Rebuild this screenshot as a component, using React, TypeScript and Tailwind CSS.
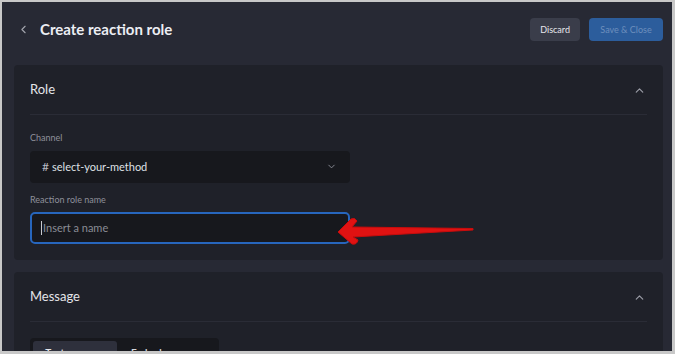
import { ChevronLeft, ChevronDown, ChevronUp } from 'lucide-react';

const font = { fontFamily: 'Lato, "Open Sans", Arial, sans-serif' };

function Card({ title, children }: { title: string; children: React.ReactNode }) {
    return (
        <div className="ml-[12px] mr-[9px] rounded-[4px] bg-[#1f2129] px-4 pb-4">
            <div className="flex h-[50px] items-center justify-between border-b border-[#2a2c36] pt-[1px]">
                <span className="text-[13px] text-[#e4e5ea]">{title}</span>
                <ChevronUp className="mr-[1px] h-[13px] w-[13px] text-[#9a9ca6]" strokeWidth={2.2} />
            </div>
            {children}
        </div>
    );
}

export default function App() {
    return (
        <div className="h-[354px] w-[675px] overflow-hidden bg-[#c8c8c8] pb-[3px] pl-[2px] pr-[3px] pt-[2px]" style={font}>
            <div className="relative h-full w-full overflow-hidden bg-[#272934]">
                {/* Header */}
                <div className="flex h-[63px] items-center justify-between pb-[8px] pl-[15px] pr-[9px]">
                    <div className="flex items-center">
                        <ChevronLeft className="h-[13px] w-[13px] text-[#a3a5ae]" strokeWidth={2} />
                        <h1 className="ml-[10px] text-[15px] font-bold text-[#eceef3]">Create reaction role</h1>
                    </div>
                    <div className="flex items-center gap-[9px]">
                        <button className="h-[23px] rounded-[4px] bg-[#3a3d4a] px-[10px] text-[9px] text-[#e6e7ec]">Discard</button>
                        <button className="h-[23px] w-[74px] rounded-[4px] bg-[#2c5d9c] text-[9px] text-[#6d8fbd]">Save &amp; Close</button>
                    </div>
                </div>

                <div className="flex flex-col gap-[12px]">
                    <Card title="Role">
                        <div className="w-[320px] pt-[16px]">
                            <div className="text-[9px] text-[#8e909a]">Channel</div>
                            <div className="mt-[6px] flex h-[32px] items-center justify-between rounded-[4px] bg-[#17181d] pl-[12px] pr-[13px]">
                                <span className="text-[11px] text-[#dfe0e5]">
                                    <span className="mr-[3px] text-[12px] text-[#b8bac2]">#</span>select-your-method
                                </span>
                                <ChevronDown className="h-[11px] w-[11px] text-[#8e909a]" strokeWidth={2} />
                            </div>
                            <div className="mt-[10px] text-[9px] text-[#8e909a]">Reaction role name</div>
                            <div className="mt-[6px] flex h-[32px] items-center rounded-[5px] border-2 border-[#2766bd] bg-[#17181d] pl-[9px]">
                                <span className="mr-[1px] h-[14px] w-px bg-[#c9cad0]" />
                                <span className="text-[11px] text-[#8a8c95]">Insert a name</span>
                            </div>
                        </div>
                    </Card>

                    <Card title="Message">
                        <div className="pt-[16px]">
                            <div className="flex w-[189px] rounded-[4px] bg-[#17181d] p-[3px]">
                                <div className="flex h-[22px] w-[84px] items-center justify-center rounded-[3px] bg-[#2e303c] text-[10px] font-bold text-[#e4e5ea]">
                                    Text message
                                </div>
                                <div className="flex h-[22px] flex-1 items-center justify-center text-[10px] font-bold text-[#d4d5db]">
                                    Embed message
                                </div>
                            </div>
                        </div>
                    </Card>
                </div>

                {/* red annotation arrow */}
                <svg className="absolute left-0 top-0" width="670" height="349" viewBox="2 2 670 349">
                    <path
                        d="M338 232 L351 219 Q355 217 357 221 L352 227 L473 228.5 L473 230 L353 237 L358 240 Q357 245 352 244 Z"
                        fill="#e01212"
                        stroke="#c80c0c"
                        strokeWidth="1"
                        strokeLinejoin="round"
                    />
                </svg>
            </div>
        </div>
    );
}
